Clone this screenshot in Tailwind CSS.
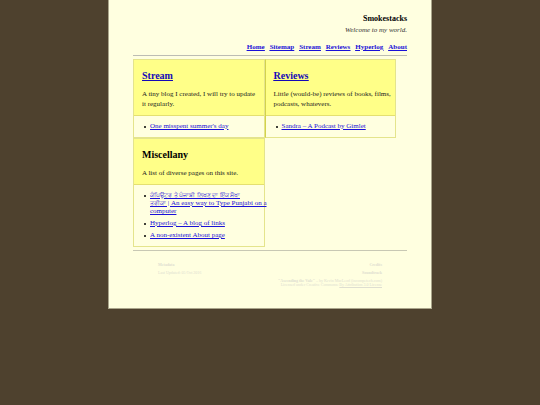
<!DOCTYPE html>
<html lang="en">
<head>
<meta charset="utf-8">
<meta name="viewport" content="width=device-width, initial-scale=1">
<title>Smokestacks</title>
<script src="https://cdn.jsdelivr.net/npm/@tailwindcss/browser@4"></script>
</head>
<body class="bg-[#4e412e] font-['Liberation_Serif',serif] text-[7px] leading-[10px] text-black">
<div class="mx-auto w-3/5 border-x border-b border-[#aaa58b] bg-[#ffffe0] px-6 pt-[14px] pb-[21px]">
  <header class="border-b border-[#bdbdb4] pb-[3px] text-right">
    <h1 class="text-[8px] font-bold">Smokestacks</h1>
    <p class="mt-px italic text-[#333]">Welcome to my world.</p>
    <nav class="mt-[7px] flex justify-end gap-[5px] font-bold text-[#1a10d8] underline">
      <a href="#">Home</a>
      <a href="#">Sitemap</a>
      <a href="#">Stream</a>
      <a href="#">Reviews</a>
      <a href="#">Hyperlog</a>
      <a href="#">About</a>
    </nav>
  </header>
  <main class="mt-[3px] flex flex-wrap items-start border-b border-[#c8c8b4] pb-[3px]">
    <section class="w-[48%] border border-[#e4e48c]">
      <div class="border-b border-[#e4e070] bg-[#ffff88] pt-[10px] pr-1 pb-[6px] pl-2">
        <h2 class="text-[10px] leading-3 font-bold text-[#1408b8] underline"><a href="#">Stream</a></h2>
        <p class="mt-[7px] text-[#222]">A tiny blog I created, I will try to update <br>it regularly.</p>
      </div>
      <ul class="py-[6px] pl-[10px] leading-[9px]">
        <li class="flex gap-1 before:mt-1 before:size-[2px] before:shrink-0 before:rounded-full before:bg-black"><a href="#" class="text-[#1a10d8] underline">One misspent summer's day</a></li>
      </ul>
    </section>
    <section class="w-[48%] border border-[#e4e48c] border-l-[#d2d24c]">
      <div class="border-b border-[#e4e070] bg-[#ffff88] pt-[10px] pr-1 pb-[6px] pl-2">
        <h2 class="text-[10px] leading-3 font-bold text-[#1408b8] underline"><a href="#">Reviews</a></h2>
        <p class="mt-[7px] text-[#222]">Little (would-be) reviews of books, films, podcasts, whatevers.</p>
      </div>
      <ul class="py-[6px] pl-[10px] leading-[9px]">
        <li class="flex gap-1 before:mt-1 before:size-[2px] before:shrink-0 before:rounded-full before:bg-black"><a href="#" class="text-[#1a10d8] underline">Sandra – A Podcast by Gimlet</a></li>
      </ul>
    </section>
    <section class="w-[48%] border border-[#e4e48c]">
      <div class="border-b border-[#e4e070] bg-[#ffff88] pt-[10px] pr-1 pb-[6px] pl-2">
        <h2 class="text-[10px] leading-3 font-bold">Miscellany</h2>
        <p class="mt-[7px] text-[#222]">A list of diverse pages on this site.</p>
      </div>
      <ul class="space-y-1 pt-[6px] pb-[7px] pl-[10px] leading-[8px]">
        <li class="-mr-1 flex gap-1 before:mt-1 before:size-[2px] before:shrink-0 before:rounded-full before:bg-black"><a href="#" class="text-[#1a10d8] underline"><span lang="pa" class="text-[6px]">ਕੰਪਿਊਟਰ ਤੇ ਪੰਜਾਬੀ ਲਿਖਣ ਦਾ ਇੱਕ ਸੌਖਾ <br>ਤਰੀਕਾ</span> | An easy way to Type Punjabi on a computer</a></li>
        <li class="flex gap-1 before:mt-1 before:size-[2px] before:shrink-0 before:rounded-full before:bg-black"><a href="#" class="text-[#1a10d8] underline">Hyperlog – A blog of links</a></li>
        <li class="flex gap-1 before:mt-1 before:size-[2px] before:shrink-0 before:rounded-full before:bg-black"><a href="#" class="text-[#1a10d8] underline">A non-existent About page</a></li>
      </ul>
    </section>
  </main>
  <footer class="mt-3 flex justify-between px-[25px] text-[4px] leading-[4px] text-[#deded0]">
    <div>
      <h3 class="font-bold">Metadata</h3>
      <p class="mt-1">Last Updated: 05 Oct 2016</p>
    </div>
    <div class="text-right">
      <h3 class="font-bold">Credits</h3>
      <h4 class="mt-1 font-bold">Soundtrack</h4>
      <p class="mt-1"><b>"Ascending the Vale"</b> – by Kevin MacLeod (incompetech.com)<br>Licensed under Creative Commons: <a href="#" class="underline">By Attribution 3.0 License</a></p>
    </div>
  </footer>
</div>
</body>
</html>
